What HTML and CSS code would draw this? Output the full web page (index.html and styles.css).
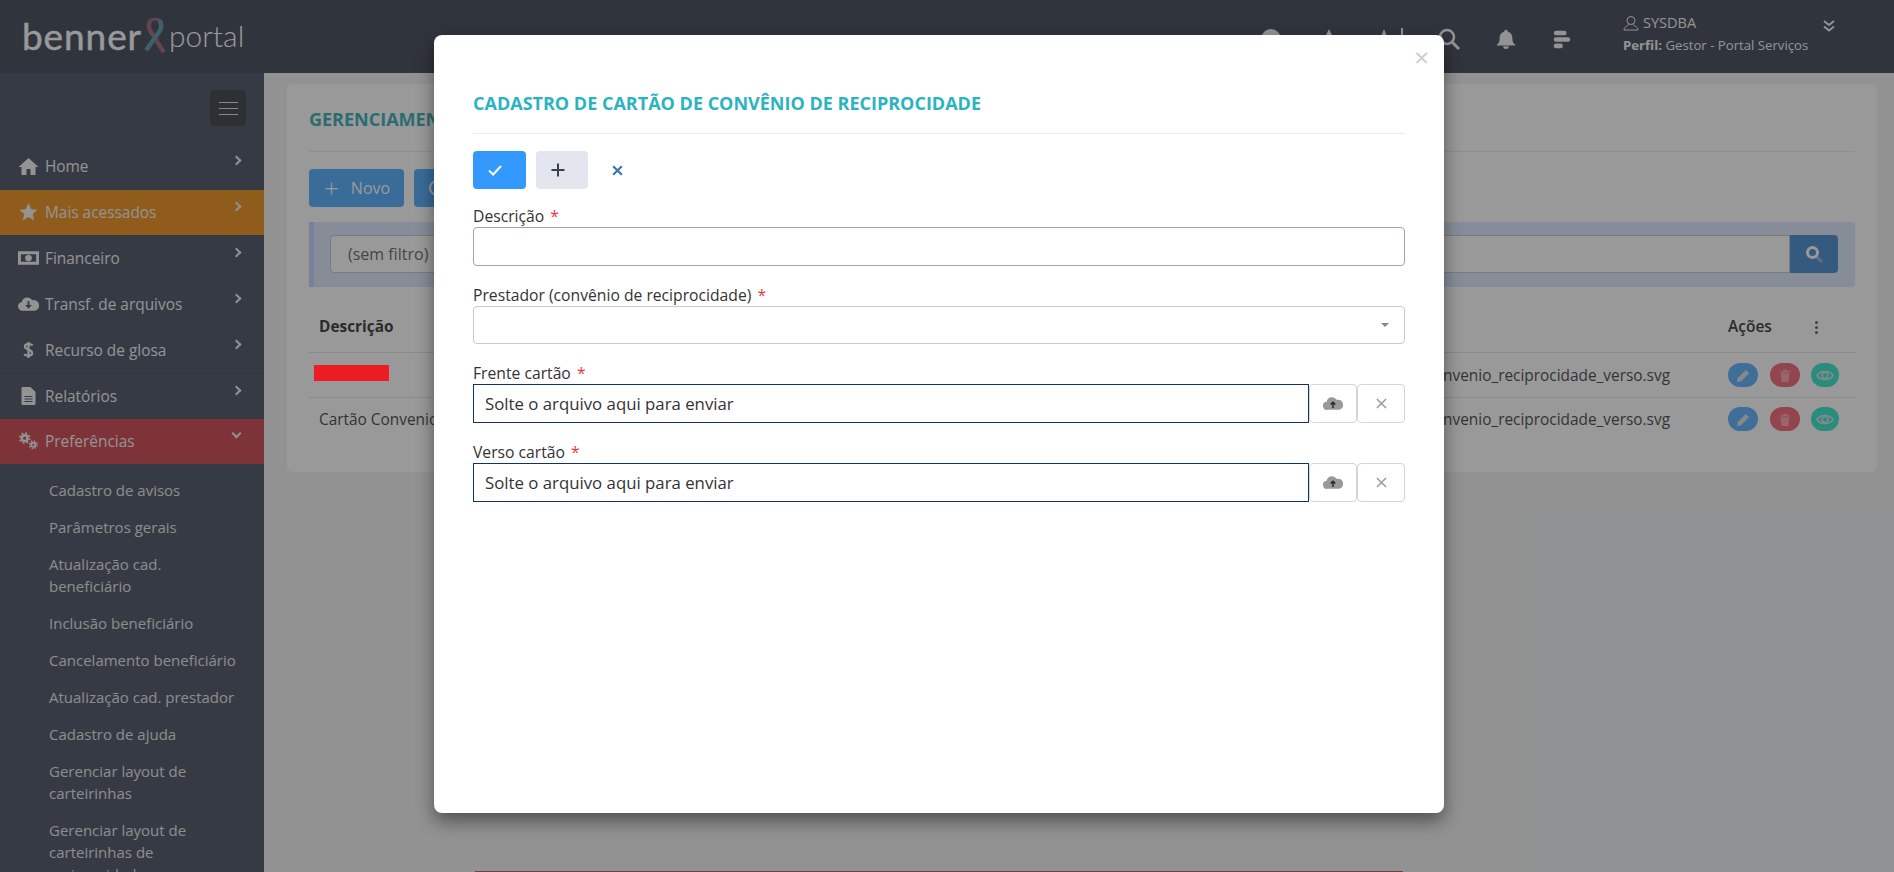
FILE: index.html
```html
<!DOCTYPE html>
<html lang="pt-BR">
<head>
    <meta charset="UTF-8">
    <title>Benner Portal</title>
    <link rel="stylesheet" href="styles.css">
</head>
<body>
    <header class="topbar">
        <div class="logo">
            <span class="logo-benner">benner</span>
            <svg class="logo-ribbon" viewBox="0 0 20 36" width="22" height="40">
                <path d="M6 2 C3 6 4 10 8 15 L18 31" fill="none" stroke="#8d5673" stroke-width="4"/>
                <path d="M14 2 C17 6 16 10 12 15 L2 29" fill="none" stroke="#4f8aa0" stroke-width="4"/>
                <path d="M6 2 C8 0 12 0 14 2" fill="none" stroke="#8d5673" stroke-width="3"/>
            </svg>
            <span class="logo-portal">portal</span>
        </div>
        <div class="topbar-icons">
            <svg class="top-icon" viewBox="0 0 24 24" width="24" height="24"><circle cx="12" cy="12" r="10"/></svg>
            <svg class="top-icon" viewBox="0 0 24 24" width="24" height="24"><path d="M12 2 L22 22 H2 Z"/></svg>
            <svg class="top-icon top-icon-wide" viewBox="0 0 32 24" width="32" height="24"><path d="M9 2 L17 22 H1 Z M26 1 h2 v22 h-2 Z"/></svg>
            <svg class="top-icon" viewBox="0 0 24 24" width="24" height="24"><circle cx="10" cy="10" r="7" fill="none" stroke="currentColor" stroke-width="2.6"/><path d="M15 15 L22 22" stroke="currentColor" stroke-width="3"/></svg>
            <svg class="top-icon" viewBox="0 0 24 24" width="22" height="22"><path d="M12 2 a2 2 0 0 1 2 2 c4 1 5 4 5 8 c0 3 1 5 3 6 v1 H2 v-1 c2-1 3-3 3-6 c0-4 1-7 5-8 a2 2 0 0 1 2-2 Z M9 20 h6 a3 3 0 0 1-6 0 Z"/></svg>
            <svg class="top-icon" viewBox="0 0 24 24" width="22" height="22"><rect x="3" y="3" width="14" height="5" rx="2.5"/><rect x="3" y="10" width="18" height="5" rx="2.5"/><rect x="3" y="17" width="10" height="5" rx="2.5"/></svg>
        </div>
        <div class="user-box">
            <div class="user-name">
                <svg viewBox="0 0 16 16" width="16" height="16"><circle cx="8" cy="5.5" r="4" fill="none" stroke="currentColor"/><path d="M6 9 C6 11 1 11 1 15 H15 C15 11 10 11 10 9" fill="none" stroke="currentColor"/></svg>
                <span>SYSDBA</span>
            </div>
            <div class="user-profile"><b>Perfil:</b> Gestor - Portal Serviços</div>
        </div>
        <svg class="user-toggle" viewBox="0 0 14 14" width="14" height="14"><path d="M2 2 L7 6 L12 2 M2 7.5 L7 11.5 L12 7.5" fill="none" stroke="currentColor" stroke-width="2"/></svg>
    </header>

    <div class="layout">
        <aside class="sidebar">
            <div class="sidebar-top">
                <button class="menu-toggle"><span></span><span></span><span></span></button>
            </div>
            <nav>
                <a class="nav-item">
                    <svg class="nav-icon" viewBox="0 0 20 18"><path d="M10 1 L20 10 H17 V18 H12 V12 H8 V18 H3 V10 H0 Z"/></svg>
                    Home <i class="chevron"></i>
                </a>
                <a class="nav-item nav-orange">
                    <svg class="nav-icon" viewBox="0 0 20 20"><path d="M10 0 L13 7 L20 7.6 L14.6 12.2 L16.4 19.5 L10 15.6 L3.6 19.5 L5.4 12.2 L0 7.6 L7 7 Z"/></svg>
                    Mais acessados <i class="chevron"></i>
                </a>
                <a class="nav-item">
                    <svg class="nav-icon" viewBox="0 0 22 16"><path fill-rule="evenodd" d="M0 1 H22 V15 H0 Z M3 4 V12 H19 V4 Z M11 4.5 a3.5 3.5 0 1 0 .01 0 Z"/></svg>
                    Financeiro <i class="chevron"></i>
                </a>
                <a class="nav-item">
                    <svg class="nav-icon" viewBox="0 0 22 16"><path fill-rule="evenodd" d="M5 15 a4.5 4.5 0 0 1-1-9 a6 6 0 0 1 11-2 a5.500 5.500 0 0 1 3 11 Z M10 5 V9 H7.500 L11 13 L14.500 9 H12 V5 Z"/></svg>
                    Transf. de arquivos <i class="chevron"></i>
                </a>
                <a class="nav-item">
                    <svg class="nav-icon" viewBox="0 0 12 20"><path d="M10.500 5 C9 3 2 2.500 2 6 C2 10 10 8.500 10 13.500 C10 17 3 17 1.200 14.500 M6 1 V19" fill="none" stroke="currentColor" stroke-width="2.500"/></svg>
                    Recurso de glosa <i class="chevron"></i>
                </a>
                <a class="nav-item">
                    <svg class="nav-icon" viewBox="0 0 14 18"><path fill-rule="evenodd" d="M1 0 H9 L14 5 V17 a1 1 0 0 1-1 1 H1 a1 1 0 0 1-1-1 V1 a1 1 0 0 1 1-1 Z M3 9 V10 H11 V9 Z M3 11.500 V12.500 H11 V11.500 Z M3 14 V15 H11 V14 Z"/></svg>
                    Relatórios <i class="chevron"></i>
                </a>
                <a class="nav-item nav-red">
                    <svg class="nav-icon" viewBox="0 0 22 18">
                        <circle cx="7" cy="6" r="3" fill="none" stroke="currentColor" stroke-width="2.500"/>
                        <circle cx="7" cy="6" r="5.200" fill="none" stroke="currentColor" stroke-width="1.800" stroke-dasharray="2 2.080"/>
                        <circle cx="16" cy="13" r="2.200" fill="none" stroke="currentColor" stroke-width="2"/>
                        <circle cx="16" cy="13" r="4" fill="none" stroke="currentColor" stroke-width="1.500" stroke-dasharray="1.600 1.540"/>
                    </svg>
                    Preferências <i class="chevron chevron-down"></i>
                </a>
                <ul class="sub-menu">
                    <li>Cadastro de avisos</li>
                    <li>Parâmetros gerais</li>
                    <li>Atualização cad. beneficiário</li>
                    <li>Inclusão beneficiário</li>
                    <li>Cancelamento beneficiário</li>
                    <li>Atualização cad. prestador</li>
                    <li>Cadastro de ajuda</li>
                    <li>Gerenciar layout de carteirinhas</li>
                    <li>Gerenciar layout de carteirinhas de reciprocidade</li>
                </ul>
            </nav>
        </aside>

        <main class="content">
            <section class="card">
                <h2 class="card-title">GERENCIAMENTO</h2>
                <div class="card-actions">
                    <button class="btn-blue"><span class="btn-plus">+</span> Novo</button>
                    <button class="btn-blue"><span class="btn-ring"></span></button>
                </div>
                <div class="filter-bar">
                    <div class="filter-input">(sem filtro)</div>
                    <button class="filter-btn">
                        <svg viewBox="0 0 18 18" width="18" height="18"><path d="M11 11 L17 17" stroke="#8fa9c4" stroke-width="3"/><circle cx="7.500" cy="7.500" r="5" fill="none" stroke="currentColor" stroke-width="3"/></svg>
                    </button>
                </div>
                <div class="grid-row grid-head">
                    <div class="cell">Descrição</div>
                    <div class="cell"></div>
                    <div class="cell cell-file"></div>
                    <div class="cell-actions">Ações <span class="dots"><i></i><i></i><i></i></span></div>
                </div>
                <div class="grid-row">
                    <div class="cell"></div>
                    <div class="cell"></div>
                    <div class="cell cell-file">cartao_convenio_reciprocidade_verso.svg</div>
                    <div class="cell-actions">
                        <span class="pill pill-blue"><svg viewBox="0 0 16 16" width="15" height="15"><path d="M1 15 L2 10.500 L10.500 2 L14 5.500 L5.500 14 Z"/></svg></span>
                        <span class="pill pill-red"><svg viewBox="0 0 16 16" width="14" height="15"><path d="M2 3 H6 V1.500 H10 V3 H14 V4.500 H2 Z M3 5.500 H13 L12 15.500 H4 Z"/></svg></span>
                        <span class="pill pill-green"><svg viewBox="0 0 20 14" width="18" height="13"><path d="M1 7 C5 1 15 1 19 7 C15 13 5 13 1 7 Z" fill="none" stroke="currentColor" stroke-width="1.600"/><circle cx="10" cy="7" r="3.200" fill="none" stroke="currentColor" stroke-width="1.600"/></svg></span>
                    </div>
                </div>
                <div class="grid-row">
                    <div class="cell">Cartão Convenio</div>
                    <div class="cell"></div>
                    <div class="cell cell-file">cartao_convenio_reciprocidade_verso.svg</div>
                    <div class="cell-actions">
                        <span class="pill pill-blue"><svg viewBox="0 0 16 16" width="15" height="15"><path d="M1 15 L2 10.500 L10.500 2 L14 5.500 L5.500 14 Z"/></svg></span>
                        <span class="pill pill-red"><svg viewBox="0 0 16 16" width="14" height="15"><path d="M2 3 H6 V1.500 H10 V3 H14 V4.500 H2 Z M3 5.500 H13 L12 15.500 H4 Z"/></svg></span>
                        <span class="pill pill-green"><svg viewBox="0 0 20 14" width="18" height="13"><path d="M1 7 C5 1 15 1 19 7 C15 13 5 13 1 7 Z" fill="none" stroke="currentColor" stroke-width="1.600"/><circle cx="10" cy="7" r="3.200" fill="none" stroke="currentColor" stroke-width="1.600"/></svg></span>
                    </div>
                </div>
            </section>
        </main>
    </div>

    <div class="backdrop"></div>
    <div class="redaction"></div>
    <div class="page-edge"></div>

    <div class="modal">
        <span class="modal-close">&times;</span>
        <h3 class="modal-title">CADASTRO DE CARTÃO DE CONVÊNIO DE RECIPROCIDADE</h3>
        <div class="modal-toolbar">
            <button class="tool-btn tool-save">
                <svg viewBox="0 0 16 16" width="16" height="16"><path d="M2 8.500 L6.200 12.500 L14 4" fill="none" stroke="currentColor" stroke-width="2"/></svg>
            </button>
            <button class="tool-btn tool-add">
                <svg viewBox="0 0 16 16" width="16" height="16"><path d="M8 1.500 V14.500 M1.500 8 H14.500" fill="none" stroke="currentColor" stroke-width="2"/></svg>
            </button>
            <button class="tool-btn tool-cancel">
                <svg viewBox="0 0 12 12" width="13" height="13"><path d="M2 2 L10 10 M10 2 L2 10" fill="none" stroke="currentColor" stroke-width="2"/></svg>
            </button>
        </div>
        <form class="modal-form">
            <div class="field">
                <label>Descrição <em>*</em></label>
                <input class="input input-active" type="text">
            </div>
            <div class="field">
                <label>Prestador (convênio de reciprocidade) <em>*</em></label>
                <div class="input select"><i class="caret"></i></div>
            </div>
            <div class="field">
                <label>Frente cartão <em>*</em></label>
                <div class="file-row">
                    <div class="file-drop">Solte o arquivo aqui para enviar</div>
                    <button type="button" class="file-btn"><svg viewBox="0 0 22 16" width="20" height="15"><path d="M5 15 a4.500 4.500 0 0 1-1-9 a6 6 0 0 1 11-2 a5.500 5.500 0 0 1 3 11 Z" fill="#999"/><path d="M11 13 V7 M8.500 9 L11 6.500 L13.500 9" fill="none" stroke="#1a2433" stroke-width="1.500"/></svg></button>
                    <button type="button" class="file-btn"><svg viewBox="0 0 12 12" width="11" height="11"><path d="M1 1 L11 11 M11 1 L1 11" fill="none" stroke="#999" stroke-width="1.600"/></svg></button>
                </div>
            </div>
            <div class="field">
                <label>Verso cartão <em>*</em></label>
                <div class="file-row">
                    <div class="file-drop">Solte o arquivo aqui para enviar</div>
                    <button type="button" class="file-btn"><svg viewBox="0 0 22 16" width="20" height="15"><path d="M5 15 a4.500 4.500 0 0 1-1-9 a6 6 0 0 1 11-2 a5.500 5.500 0 0 1 3 11 Z" fill="#999"/><path d="M11 13 V7 M8.500 9 L11 6.500 L13.500 9" fill="none" stroke="#1a2433" stroke-width="1.500"/></svg></button>
                    <button type="button" class="file-btn"><svg viewBox="0 0 12 12" width="11" height="11"><path d="M1 1 L11 11 M11 1 L1 11" fill="none" stroke="#999" stroke-width="1.600"/></svg></button>
                </div>
            </div>
        </form>
    </div>
</body>
</html>
```

FILE: styles.css
```css
html, body {
    margin: 0;
    height: 872px;
    overflow: hidden;
}
body {
    font-family: "Open Sans", sans-serif;
    font-size: 15.4px;
    color: #333;
    background: #f0f1f3;
}
button {
    font-family: inherit;
    border: none;
    cursor: pointer;
}

/* top bar */
.topbar {
    height: 73px;
    background: #2d3547;
    display: flex;
    align-items: center;
    color: #f2f2f2;
}
.logo {
    width: 264px;
    display: flex;
    align-items: center;
    padding-left: 22px;
    box-sizing: border-box;
    font-family: Lato, sans-serif;
    height: 73px;
    color: #fff;
}
.logo-benner {
    font-size: 37px;
    letter-spacing: 0.9px;
    line-height: 1;
    margin-top: -3px;
    -webkit-text-stroke: 0.4px #fff;
}
.logo-ribbon {
    margin: 3px 3px 0 2px;
    flex-shrink: 0;
}
.logo-portal {
    font-size: 30px;
    font-weight: 300;
    line-height: 1;
    margin-top: -3px;
}
.topbar-icons {
    margin-left: 995px;
    display: flex;
    align-items: center;
    gap: 34px;
    width: 350px;
    margin-top: 4px;
    color: #f2f2f2;
}
.top-icon {
    fill: currentColor;
    flex-shrink: 0;
}
.top-icon-wide {
    margin-right: -4px;
}
.user-box {
    margin-left: 14px;
    width: 192px;
    font-size: 13.2px;
    margin-top: -5px;
}
.user-name {
    display: flex;
    align-items: center;
    gap: 4px;
    line-height: 22px;
    font-size: 14.5px;
}
.user-profile {
    line-height: 22px;
}
.user-toggle {
    margin-left: 7px;
    margin-top: -22px;
}

/* sidebar */
.layout {
    display: flex;
    height: 799px;
}
.sidebar {
    width: 264px;
    flex-shrink: 0;
    background: #394155;
    color: #f2f2f2;
    overflow: hidden;
}
.sidebar-top {
    height: 70px;
    padding: 17px 18px 0 0;
    box-sizing: border-box;
    display: flex;
    justify-content: flex-end;
    align-items: flex-start;
}
.menu-toggle {
    width: 36px;
    height: 36px;
    background: #292d39;
    border-radius: 4px;
    display: flex;
    flex-direction: column;
    justify-content: center;
    align-items: center;
    gap: 5px;
    padding: 0;
}
.menu-toggle span {
    display: block;
    width: 19px;
    height: 1px;
    background: #ddd;
}
.nav-item {
    height: 46px;
    box-sizing: border-box;
    display: flex;
    align-items: center;
    padding: 0 0 1px 18px;
    border-top: 1px solid #353d50;
    position: relative;
    font-size: 15.4px;
}
.nav-orange {
    background: #eb8505;
}
.nav-red {
    background: #c7333d;
    margin-top: -1px;
}
.nav-icon {
    width: 21px;
    height: 18px;
    margin-right: 6px;
    fill: currentColor;
    flex-shrink: 0;
}
.chevron {
    position: absolute;
    left: 233px;
    top: 13px;
    width: 5px;
    height: 5px;
    border-right: 2px solid #eee;
    border-top: 2px solid #eee;
    transform: rotate(45deg);
}
.chevron-down {
    transform: rotate(135deg);
    top: 11px;
}
.sub-menu {
    list-style: none;
    margin: 0;
    padding: 7px 24px 0 49px;
    color: #e4e4e4;
    font-size: 15px;
}
.sub-menu li {
    line-height: 22px;
    padding: 8px 0 7px;
}

/* page behind the modal */
.content {
    flex: 1;
    padding: 11px 17px 0 23px;
}
.card {
    height: 388px;
    box-sizing: border-box;
    background: #fff;
    border-radius: 6px;
    padding: 23px 22px 0;
    overflow: hidden;
}
.card-title {
    margin: 0;
    font-size: 18px;
    line-height: 24px;
    font-weight: 700;
    color: #23a5ae;
    padding-bottom: 20px;
    border-bottom: 1px solid #e8e8e8;
}
.card-actions {
    display: flex;
    gap: 10px;
    margin-top: 17px;
}
.btn-blue {
    height: 38px;
    background: #41a5ff;
    color: #fff;
    border-radius: 4px;
    font-size: 16px;
    padding: 0 14px 0 15px;
    display: flex;
    align-items: center;
}
.btn-plus {
    font-size: 26px;
    font-weight: 300;
    margin-right: 12px;
    line-height: 1;
}
.btn-ring {
    width: 12px;
    height: 12px;
    border: 2px solid #fff;
    border-radius: 50%;
    margin-right: 60px;
}
.filter-bar {
    margin-top: 15px;
    height: 65px;
    box-sizing: border-box;
    background: #d9e7ff;
    border-left: 5px solid #b8d0ff;
    border-radius: 0 4px 4px 0;
    padding: 13px 17px 0 16px;
    display: flex;
}
.filter-input {
    flex: 1;
    height: 38px;
    box-sizing: border-box;
    background: #fff;
    border: 1px solid #bcc4d0;
    border-radius: 4px 0 0 4px;
    padding-left: 17px;
    line-height: 36px;
    font-size: 16px;
    color: #555;
}
.filter-btn {
    width: 48px;
    height: 38px;
    background: #3781cd;
    color: #fff;
    border-radius: 0 4px 4px 0;
    padding: 0;
    display: flex;
    align-items: center;
    justify-content: center;
}
.grid-row {
    display: grid;
    grid-template-columns: 420px 500px 1fr 127px;
    height: 44px;
    align-items: center;
    border-bottom: 1px solid #dee3ea;
}
.grid-row:last-child {
    border-bottom: none;
    margin-top: -1px;
}
.grid-head {
    height: 53px;
    margin-top: 13px;
    font-weight: 700;
    color: #222;
    box-sizing: border-box;
}
.cell {
    padding-left: 10px;
    white-space: nowrap;
    overflow: hidden;
}
.cell-file {
    text-align: right;
    padding-right: 58px;
}
.cell-actions {
    display: flex;
    align-items: center;
    gap: 12px;
}
.grid-head .cell-actions {
    font-weight: 600;
    font-size: 15.5px;
    gap: 43px;
}
.dots {
    display: flex;
    flex-direction: column;
    gap: 2px;
    padding-top: 2px;
}
.dots i {
    width: 3px;
    height: 3px;
    background: #555;
    border-radius: 50%;
}
.pill {
    width: 30px;
    height: 24px;
    border-radius: 12px;
    display: flex;
    align-items: center;
    justify-content: center;
    color: #ccc;
    fill: #ddd;
}
.pill-blue {
    background: #4aa9ff;
}
.pill-red {
    background: #f2566a;
    fill: #ff9aa0;
}
.pill-green {
    background: #21e6c4;
    width: 28px;
    margin-left: -1px;
    color: #dde;
}

/* modal layer */
.backdrop {
    position: absolute;
    inset: 0;
    background: rgba(51, 51, 51, 0.5);
}
.redaction {
    position: absolute;
    left: 314px;
    top: 365px;
    width: 75px;
    height: 16px;
    background: #ed1c24;
}
.page-edge {
    position: absolute;
    left: 475px;
    top: 871px;
    width: 928px;
    height: 1px;
    background: #7a3d3d;
}
.modal {
    position: absolute;
    left: 434px;
    top: 35px;
    width: 1010px;
    height: 778px;
    box-sizing: border-box;
    background: #fff;
    border-radius: 8px;
    padding: 56px 39px 0;
    box-shadow: 0 8px 18px rgba(0, 0, 0, 0.45);
}
.modal-close {
    position: absolute;
    right: 15px;
    top: 9px;
    font-size: 26px;
    color: #ccc;
    line-height: 26px;
}
.modal-title {
    margin: 0;
    font-size: 18px;
    line-height: 24px;
    font-weight: 700;
    color: #2bb4c0;
    padding-bottom: 18px;
    border-bottom: 1px solid #e9ebee;
}
.modal-toolbar {
    display: flex;
    gap: 10px;
    margin-top: 17px;
}
.tool-btn {
    height: 38px;
    width: 53px;
    border-radius: 4px;
    padding: 0 9px 0 0;
    display: flex;
    align-items: center;
    justify-content: center;
}
.tool-save {
    background: #3399ff;
    color: #fff;
}
.tool-add {
    background: #e4e6ef;
    color: #3a3f51;
    width: 52px;
}
.tool-cancel {
    background: none;
    color: #3a74b5;
    width: 47px;
}
.modal-form {
    margin-top: 18px;
    display: flex;
    flex-direction: column;
    gap: 20px;
}
.field label {
    display: block;
    line-height: 18px;
    margin-bottom: 2px;
    color: #333;
    font-size: 15.7px;
}
.field em {
    color: #f1353d;
    font-style: normal;
    margin-left: 2px;
}
.input {
    display: block;
    width: 100%;
    height: 38.7px;
    box-sizing: border-box;
    border: 1px solid #c4cbd8;
    border-radius: 4px;
    background: #fff;
    position: relative;
    margin: 0;
    padding: 0;
}
.input-active {
    border-color: #99a3bd;
}
.caret {
    position: absolute;
    right: 15px;
    top: 16px;
    border-left: 4px solid transparent;
    border-right: 4px solid transparent;
    border-top: 4px solid #888;
}
.file-row {
    display: flex;
    height: 38.7px;
}
.file-drop {
    flex: 1;
    box-sizing: border-box;
    border: 1px solid #0f3460;
    padding-left: 11px;
    line-height: 37px;
    font-size: 16.8px;
    color: #333;
}
.file-btn {
    width: 48px;
    background: #fff;
    border: 1px solid #d5d5d5;
    border-radius: 4px;
    padding: 0;
    display: flex;
    align-items: center;
    justify-content: center;
}
```
